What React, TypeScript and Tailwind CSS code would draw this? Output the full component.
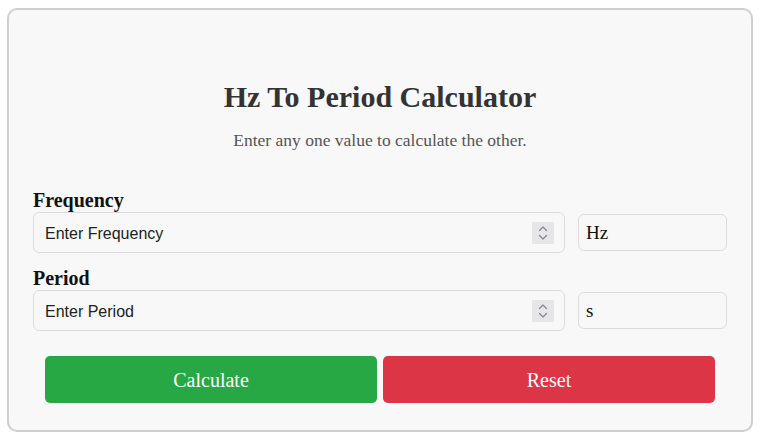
import React, { useState } from 'react';

const serif = { fontFamily: '"Liberation Serif", "Times New Roman", serif' };

const Spinner = () => (
  <div className="w-[22px] h-[22px] bg-[#e6e6e9] flex items-center justify-center shrink-0">
    <svg width="12" height="18" viewBox="0 0 12 18" fill="none" stroke="#8a8a8f" strokeWidth="1.3" strokeLinecap="round" strokeLinejoin="round">
      <path d="M2.5 6.5 L6 3 L9.5 6.5" />
      <path d="M2.5 11.5 L6 15 L9.5 11.5" />
    </svg>
  </div>
);

const Field = ({ label, placeholder, unit, value, onChange }: { label: string; placeholder: string; unit: string; value: string; onChange: (v: string) => void }) => (
  <div className="flex flex-col">
    <label className="text-[20px] leading-[24px] font-bold text-[#111]" style={serif}>{label}</label>
    <div className="flex items-center gap-[13px]">
      <div className="flex-1 h-[41px] border border-[#dcdcdc] rounded-[6px] bg-[#f8f8f8] flex items-center pl-[11px] pr-[10px]">
        <input
          type="text"
          value={value}
          onChange={e => onChange(e.target.value)}
          placeholder={placeholder}
          className="flex-1 bg-transparent outline-none text-[16px] text-[#222] placeholder:text-[#222] pt-[3px]"
          style={{ fontFamily: '"Liberation Sans", Arial, sans-serif' }}
        />
        <Spinner />
      </div>
      <div className="w-[149px] h-[37px] border border-[#dcdcdc] rounded-[6px] bg-[#f8f8f8] flex items-center px-[7px] pt-[2px] text-[19px] text-[#111]" style={serif}>
        {unit}
      </div>
    </div>
  </div>
);

export default function App() {
  const [freq, setFreq] = useState('');
  const [period, setPeriod] = useState('');

  return (
    <div className="w-[768px] h-[432px] bg-white pt-2 pl-[7px]">
      <div className="w-[746px] h-[424px] border-2 border-[#cfcfcf] rounded-[10px] bg-[#f8f8f8] px-6 pt-[72px]">
        <h1 className="text-center text-[30px] leading-[30px] font-bold text-[#333]" style={serif}>Hz To Period Calculator</h1>
        <p className="text-center text-[17.5px] leading-[20px] text-[#555] mt-[18px]" style={serif}>Enter any one value to calculate the other.</p>

        <div className="mt-[38px]">
          <Field label="Frequency" placeholder="Enter Frequency" unit="Hz" value={freq} onChange={setFreq} />
        </div>
        <div className="mt-[13px]">
          <Field label="Period" placeholder="Enter Period" unit="s" value={period} onChange={setPeriod} />
        </div>

        <div className="flex gap-[6px] px-3 mt-[25px]">
          <button
            className="flex-1 h-[47px] rounded-[5px] bg-[#28a745] text-white text-[20px]"
            style={serif}
            onClick={() => {
              const f = parseFloat(freq);
              const p = parseFloat(period);
              if (f) setPeriod(String(1 / f));
              else if (p) setFreq(String(1 / p));
            }}
          >
            Calculate
          </button>
          <button
            className="flex-1 h-[47px] rounded-[5px] bg-[#dc3545] text-white text-[20px]"
            style={serif}
            onClick={() => { setFreq(''); setPeriod(''); }}
          >
            Reset
          </button>
        </div>
      </div>
    </div>
  );
}
